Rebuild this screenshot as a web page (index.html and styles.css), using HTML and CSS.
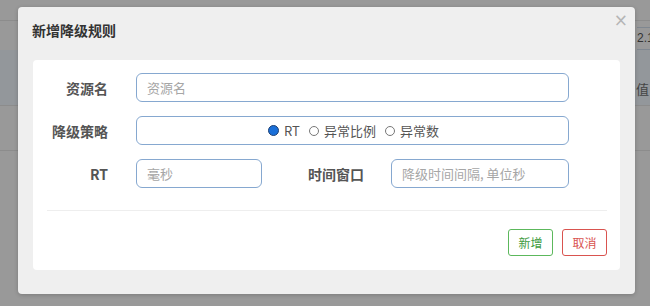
FILE: index.html
```html
<!DOCTYPE html>
<html lang="zh-CN">
<head>
    <meta charset="UTF-8">
    <title>新增降级规则</title>
    <link rel="stylesheet" href="styles.css">
</head>
<body>
    <div class="page">
        <div class="page-top"></div>
        <div class="page-toolbar">
            <div class="page-search">2.16.0</div>
        </div>
        <div class="page-thead">
            <span class="page-th">值</span>
        </div>
        <div class="page-row"></div>
    </div>

    <div class="modal">
        <div class="modal-header">
            <h4 class="modal-title">新增降级规则</h4>
            <span class="modal-close">&times;</span>
        </div>
        <div class="modal-body">
            <div class="form-row">
                <label class="form-label">资源名</label>
                <input class="form-input" type="text" placeholder="资源名">
            </div>
            <div class="form-row">
                <label class="form-label">降级策略</label>
                <div class="form-input radio-box">
                    <label class="radio"><span class="radio-dot checked"></span>RT</label>
                    <label class="radio"><span class="radio-dot"></span>异常比例</label>
                    <label class="radio"><span class="radio-dot"></span>异常数</label>
                </div>
            </div>
            <div class="form-row">
                <label class="form-label">RT</label>
                <input class="form-input input-short" type="text" placeholder="毫秒">
                <label class="form-label label-window">时间窗口</label>
                <input class="form-input input-window" type="text" placeholder="降级时间间隔, 单位秒">
            </div>
            <div class="modal-divider"></div>
            <div class="modal-actions">
                <button class="btn btn-success">新增</button>
                <button class="btn btn-danger">取消</button>
            </div>
        </div>
    </div>
</body>
</html>
```

FILE: styles.css
```css
body {
    margin: 0;
    background-color: #999999;
    font-family: "Liberation Sans", "Noto Sans CJK SC", sans-serif;
    overflow: hidden;
}
.page {
    height: 306px;
}
.page-top {
    height: 20px;
    border-bottom: 1px solid #8c8c8c;
}
.page-toolbar {
    height: 29px;
    display: flex;
    justify-content: flex-end;
    align-items: flex-end;
}
.page-search {
    width: 13px;
    height: 21px;
    border-top: 1px solid #7f8790;
    border-bottom: 1px solid #7f8790;
    font-size: 12px;
    line-height: 21px;
    color: #333;
    overflow: hidden;
    white-space: nowrap;
}
.page-thead {
    height: 55px;
    background-color: #93979b;
    border-bottom: 1px solid #8c8c8c;
    display: flex;
    justify-content: flex-end;
    align-items: center;
}
.page-th {
    width: 14px;
    font-size: 13px;
    color: #444;
    padding-top: 22px;
}
.page-row {
    height: 44px;
    border-bottom: 1px solid #8c8c8c;
}

.modal {
    position: absolute;
    left: 18px;
    top: 7px;
    width: 617px;
    height: 287px;
    box-sizing: border-box;
    background-color: #efefef;
    border-radius: 4px;
    box-shadow: 0 1px 4px rgba(0,0,0,0.2);
    padding: 0 15px 24px;
    display: flex;
    flex-direction: column;
}
.modal-header {
    height: 53px;
    display: flex;
    justify-content: space-between;
    align-items: flex-start;
}
.modal-title {
    margin: 13px 0 0 -1px;
    font-size: 14px;
    font-weight: bold;
    color: #333;
    font-family: "Noto Sans CJK SC", sans-serif;
}
.modal-close {
    margin: 5px -8px 0 0;
    font-size: 17px;
    line-height: 17px;
    color: #b5b5b5;
    font-family: "DejaVu Sans", sans-serif;
}
.modal-body {
    flex: 1;
    background-color: white;
    border-radius: 4px;
    padding: 13px 13px 14px 14px;
    display: flex;
    flex-direction: column;
}
.form-row {
    display: flex;
    align-items: center;
    margin-bottom: 14px;
}
.form-label {
    width: 61px;
    text-align: right;
    font-size: 14px;
    font-weight: bold;
    color: #555;
    margin-right: 28px;
    font-family: "Noto Sans CJK SC", sans-serif;
}
.form-input {
    width: 433px;
    height: 29px;
    box-sizing: border-box;
    border: 1px solid #86a8d0;
    border-radius: 6px;
    padding: 0 10px;
    font-size: 13px;
    color: #555;
    font-family: "Noto Sans CJK SC", sans-serif;
    background-color: white;
    outline: none;
}
.form-input::placeholder {
    color: #a6a6a6;
}
.input-short {
    width: 126px;
}
.label-window {
    width: 58px;
    margin-left: 44px;
    margin-right: 27px;
}
.input-window {
    width: 178px;
}
.radio-box {
    display: flex;
    justify-content: center;
    align-items: center;
    gap: 9px;
    color: #555;
    padding-left: 12px;
}
.radio {
    display: flex;
    align-items: center;
    font-size: 13px;
}
.radio-dot {
    width: 8px;
    height: 8px;
    border: 1px solid #777;
    border-radius: 50%;
    margin-right: 5px;
}
.radio-dot.checked {
    width: 9px;
    height: 9px;
    background-color: #1a6fd8;
    border-color: #1d3f72;
}
.modal-divider {
    border-top: 1px solid #eeeeee;
    margin-top: 8px;
}
.modal-actions {
    display: flex;
    justify-content: flex-end;
    gap: 9px;
    margin-top: auto;
}
.btn {
    width: 45px;
    height: 27px;
    background-color: white;
    border: 1px solid;
    border-radius: 3px;
    font-size: 12px;
    font-family: "Noto Sans CJK SC", sans-serif;
    padding: 0;
    cursor: pointer;
}
.btn-success {
    border-color: #5cb85c;
    color: #3e9b3e;
}
.btn-danger {
    border-color: #d9534f;
    color: #d9534f;
}
```
